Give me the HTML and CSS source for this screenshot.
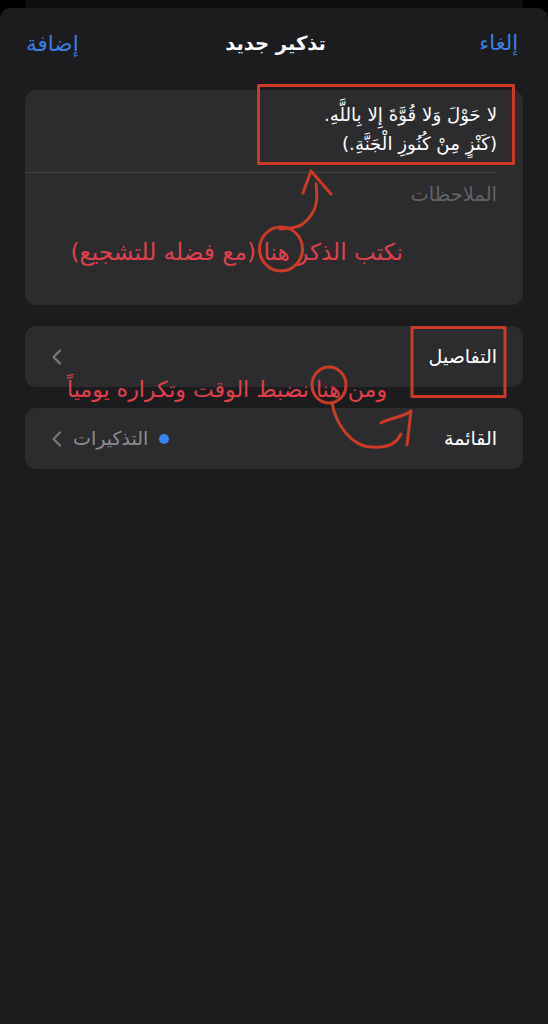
FILE: index.html
```html
<!DOCTYPE html>
<html lang="ar" dir="rtl">
<head>
<meta charset="utf-8">
<title>تذكير جديد</title>
<link rel="stylesheet" href="styles.css">
</head>
<body>
<div class="screen">
  <div class="back-card"></div>
  <main class="sheet">
    <header class="nav">
      <span class="nav-btn">إلغاء</span>
      <span class="nav-title">تذكير جديد</span>
      <span class="nav-btn nav-add">إضافة</span>
    </header>
    <section class="card fields">
      <div class="title-field">
        <p>لا حَوْلَ وَلا قُوَّةَ إِلا بِاللَّهِ.</p>
        <p>(كَنْزٍ مِنْ كُنُوزِ الْجَنَّةِ.)</p>
      </div>
      <div class="notes-field">الملاحظات</div>
    </section>
    <section class="card row details">
      <span class="label">التفاصيل</span>
      <svg class="chev" viewBox="0 0 12 18" width="12" height="18"><path d="M10 2.500 3.500 9l6.500 6.500"/></svg>
    </section>
    <section class="card row list">
      <span class="label">القائمة</span>
      <span class="value">
        <i class="dot"></i>
        <span class="value-text">التذكيرات</span>
        <svg class="chev" viewBox="0 0 12 18" width="12" height="18"><path d="M10 2.500 3.500 9l6.500 6.500"/></svg>
      </span>
    </section>
  </main>
  <span class="note note-one">نكتب الذكر هنا (مع فضله للتشجيع)</span>
  <span class="note note-two">ومن هنا نضبط الوقت وتكراره يومياً</span>
  <svg class="marks" viewBox="0 0 548 1024" width="548" height="1024">
    <rect x="258.500" y="85.500" width="255" height="78"/>
    <rect x="412" y="327.500" width="93" height="69"/>
    <ellipse cx="281" cy="249" rx="21.500" ry="22"/>
    <ellipse cx="329" cy="385" rx="17" ry="18"/>
    <path d="M280 229C292 228 298 228 304 223 314 214 319 205 316 184"/>
    <path d="M303 193 311 171 331 194"/>
    <path d="M332 403C336 425 352 447 372 447 388 448 396 444 401 434"/>
    <path d="M407 445 411 411C402 418 392 417 381 423"/>
  </svg>
</div>
</body>
</html>
```
FILE: styles.css
```css
* { box-sizing: border-box; }
html, body { margin: 0; padding: 0; }
body {
  background: #000;
  font-family: "DejaVu Sans", "Noto Sans", sans-serif;
}
.screen {
  position: relative;
  width: 548px;
  height: 1024px;
  overflow: hidden;
}
.back-card {
  height: 8px;
  margin: 0 25px;
  background: #0e0e0f;
}
.sheet {
  height: 1016px;
  padding: 0 25px;
  background: #1c1c1e;
  border-radius: 11px 11px 0 0;
  display: flex;
  flex-direction: column;
}
.nav {
  height: 82px;
  padding: 0 5px 12px 0;
  display: flex;
  align-items: center;
  justify-content: space-between;
  color: #fff;
}
.nav-btn { color: #3b7fe6; font-size: 21px; }
.nav-add { margin-left: 1px; font-size: 21.500px; }
.nav-title { font-size: 19.500px; font-weight: 700; margin-right: 7px; }
.card {
  background: #2c2c2e;
  border-radius: 11px;
}
.fields {
  height: 215px;
  padding-right: 26px;
}
.title-field {
  height: 83px;
  padding-top: 10px;
  color: #fff;
  font-size: 18.200px;
  line-height: 29px;
  border-bottom: 1px solid #414144;
}
.title-field p { margin: 0; }
.notes-field {
  padding-top: 8px;
  color: #636366;
  font-size: 19.500px;
  line-height: 28px;
}
.row {
  height: 61px;
  padding: 0 26px 0 25px;
  display: flex;
  align-items: center;
  justify-content: space-between;
  color: #fff;
  font-size: 19px;
}
.label { margin-top: -2px; }
.details { margin-top: 21px; }
.list { margin-top: 21px; }
.value {
  display: flex;
  align-items: center;
  gap: 11px;
  color: #8e8e93;
  font-size: 19px;
}
.value-text { margin-top: -2px; }
.dot {
  width: 10px;
  height: 10px;
  border-radius: 50%;
  background: #3b82f6;
}
.chev { display: block; }
.chev path {
  fill: none;
  stroke: #79797e;
  stroke-width: 2.200;
  stroke-linecap: round;
  stroke-linejoin: round;
}
.note {
  position: absolute;
  color: #e2404a;
  line-height: 30px;
  white-space: nowrap;
}
.note-one { right: 145px; top: 237px; font-size: 23.200px; }
.note-two { right: 161px; top: 375px; font-size: 22px; }
.marks {
  position: absolute;
  left: 0;
  top: 0;
  pointer-events: none;
}
.marks rect, .marks ellipse, .marks path {
  fill: none;
  stroke: #cc3b24;
  stroke-width: 3;
  stroke-linecap: round;
  stroke-linejoin: round;
}
```
